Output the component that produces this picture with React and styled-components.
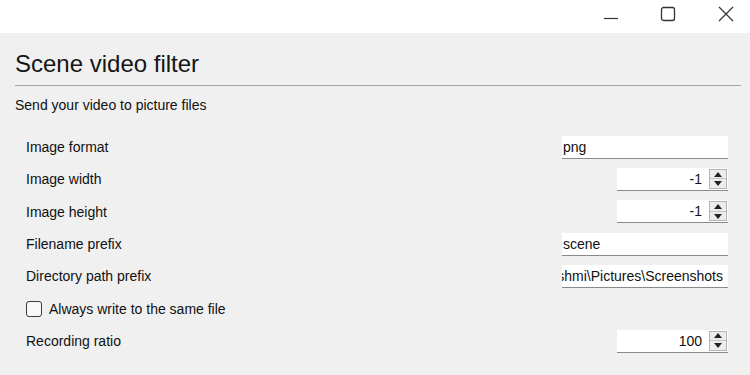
import React from "react";
import styled, { createGlobalStyle } from "styled-components";

const GlobalStyle = createGlobalStyle`
  html, body {
    margin: 0;
    padding: 0;
    background: #f0f0f0;
    font-family: "Liberation Sans", Arial, sans-serif;
    color: #111;
  }
  * { box-sizing: border-box; }
`;

const Window = styled.div`
  width: 750px;
  height: 375px;
  display: flex;
  flex-direction: column;
  background: #f0f0f0;
  overflow: hidden;
`;

const TitleBar = styled.div`
  height: 33px;
  background: #ffffff;
  display: flex;
  justify-content: flex-end;
  align-items: center;
  gap: 27.5px;
  padding-right: 9.5px;
`;

const WinButton = styled.div`
  width: 30px;
  height: 33px;
  display: flex;
  align-items: center;
  justify-content: center;
  margin-top: -5px;
`;

const Panel = styled.div`
  flex: 1;
  padding: 17px 9px 0 15px;
  display: flex;
  flex-direction: column;
`;

const Heading = styled.h1`
  margin: 0;
  font-size: 24px;
  line-height: 28px;
  font-weight: normal;
  color: #151515;
`;

const Separator = styled.div`
  height: 1px;
  background: #a3a3a3;
  margin-top: 7px;
`;

const Subtitle = styled.div`
  margin-top: 9px;
  font-size: 14px;
  line-height: 20px;
`;

const Rows = styled.div`
  margin-top: 16px;
  padding: 0 13px 0 11px;
  display: flex;
  flex-direction: column;
`;

const Row = styled.div`
  height: 32.33px;
  display: flex;
  align-items: center;
  justify-content: space-between;
`;

const Label = styled.span`
  font-size: 14px;
  line-height: 20px;
`;

const TextField = styled.div`
  width: 166px;
  height: 23px;
  background: #ffffff;
  border-bottom: 1px solid #8a8a8a;
  display: flex;
  align-items: center;
  justify-content: ${(p) => (p.$clip ? "flex-end" : "flex-start")};
  overflow: hidden;
  padding: 0 ${(p) => (p.$clip ? "5px" : "0")} 0 1px;
  font-size: 14px;
  white-space: nowrap;

  span { flex-shrink: 0; }
`;

const SpinBox = styled.div`
  width: 111px;
  height: 23px;
  background: #ffffff;
  border-bottom: 1px solid #8a8a8a;
  display: flex;
  align-items: center;
  justify-content: flex-end;
  padding-right: 1px;
  font-size: 14px;
`;

const SpinValue = styled.span`
  margin-right: 7px;
`;

const SpinArrows = styled.div`
  width: 18px;
  height: 20px;
  border: 1px solid #b4b4b4;
  background: #ececec;
  display: flex;
  flex-direction: column;
`;

const Arrow = styled.div`
  flex: 1;
  display: flex;
  align-items: center;
  justify-content: center;
  & + & { border-top: 1px solid #c4c4c4; }
`;

const CheckRow = styled.label`
  display: flex;
  align-items: center;
  gap: 7px;
  font-size: 14px;
  line-height: 20px;
`;

const Box = styled.span`
  width: 16px;
  height: 16px;
  border: 1px solid #3a3a3a;
  border-radius: 3px;
  background: #f8f8f8;
`;

const Tri = ({ up }) => (
  <svg width="8" height="5" viewBox="0 0 8 5">
    <polygon points={up ? "0,5 8,5 4,0" : "0,0 8,0 4,5"} fill="#222" />
  </svg>
);

const Spin = ({ value }) => (
  <SpinBox>
    <SpinValue>{value}</SpinValue>
    <SpinArrows>
      <Arrow><Tri up /></Arrow>
      <Arrow><Tri /></Arrow>
    </SpinArrows>
  </SpinBox>
);

export default function App() {
  return (
    <Window>
      <GlobalStyle />
      <TitleBar>
        <WinButton>
          <svg width="16" height="16" viewBox="0 0 16 16">
            <line x1="1" y1="12.5" x2="15" y2="12.5" stroke="#333" strokeWidth="1.2" />
          </svg>
        </WinButton>
        <WinButton>
          <svg width="16" height="16" viewBox="0 0 16 16">
            <rect x="1.5" y="1.5" width="13" height="13" rx="2" fill="none" stroke="#333" strokeWidth="1.3" />
          </svg>
        </WinButton>
        <WinButton>
          <svg width="16" height="16" viewBox="0 0 16 16">
            <path d="M1 1 L15 15 M15 1 L1 15" stroke="#333" strokeWidth="1.2" />
          </svg>
        </WinButton>
      </TitleBar>
      <Panel>
        <Heading>Scene video filter</Heading>
        <Separator />
        <Subtitle>Send your video to picture files</Subtitle>
        <Rows>
          <Row>
            <Label>Image format</Label>
            <TextField><span>png</span></TextField>
          </Row>
          <Row>
            <Label>Image width</Label>
            <Spin value="-1" />
          </Row>
          <Row>
            <Label>Image height</Label>
            <Spin value="-1" />
          </Row>
          <Row>
            <Label>Filename prefix</Label>
            <TextField><span>scene</span></TextField>
          </Row>
          <Row>
            <Label>Directory path prefix</Label>
            <TextField $clip><span>C:\Users\Rashmi\Pictures\Screenshots</span></TextField>
          </Row>
          <Row>
            <CheckRow>
              <Box />
              Always write to the same file
            </CheckRow>
          </Row>
          <Row>
            <Label>Recording ratio</Label>
            <Spin value="100" />
          </Row>
        </Rows>
      </Panel>
    </Window>
  );
}
